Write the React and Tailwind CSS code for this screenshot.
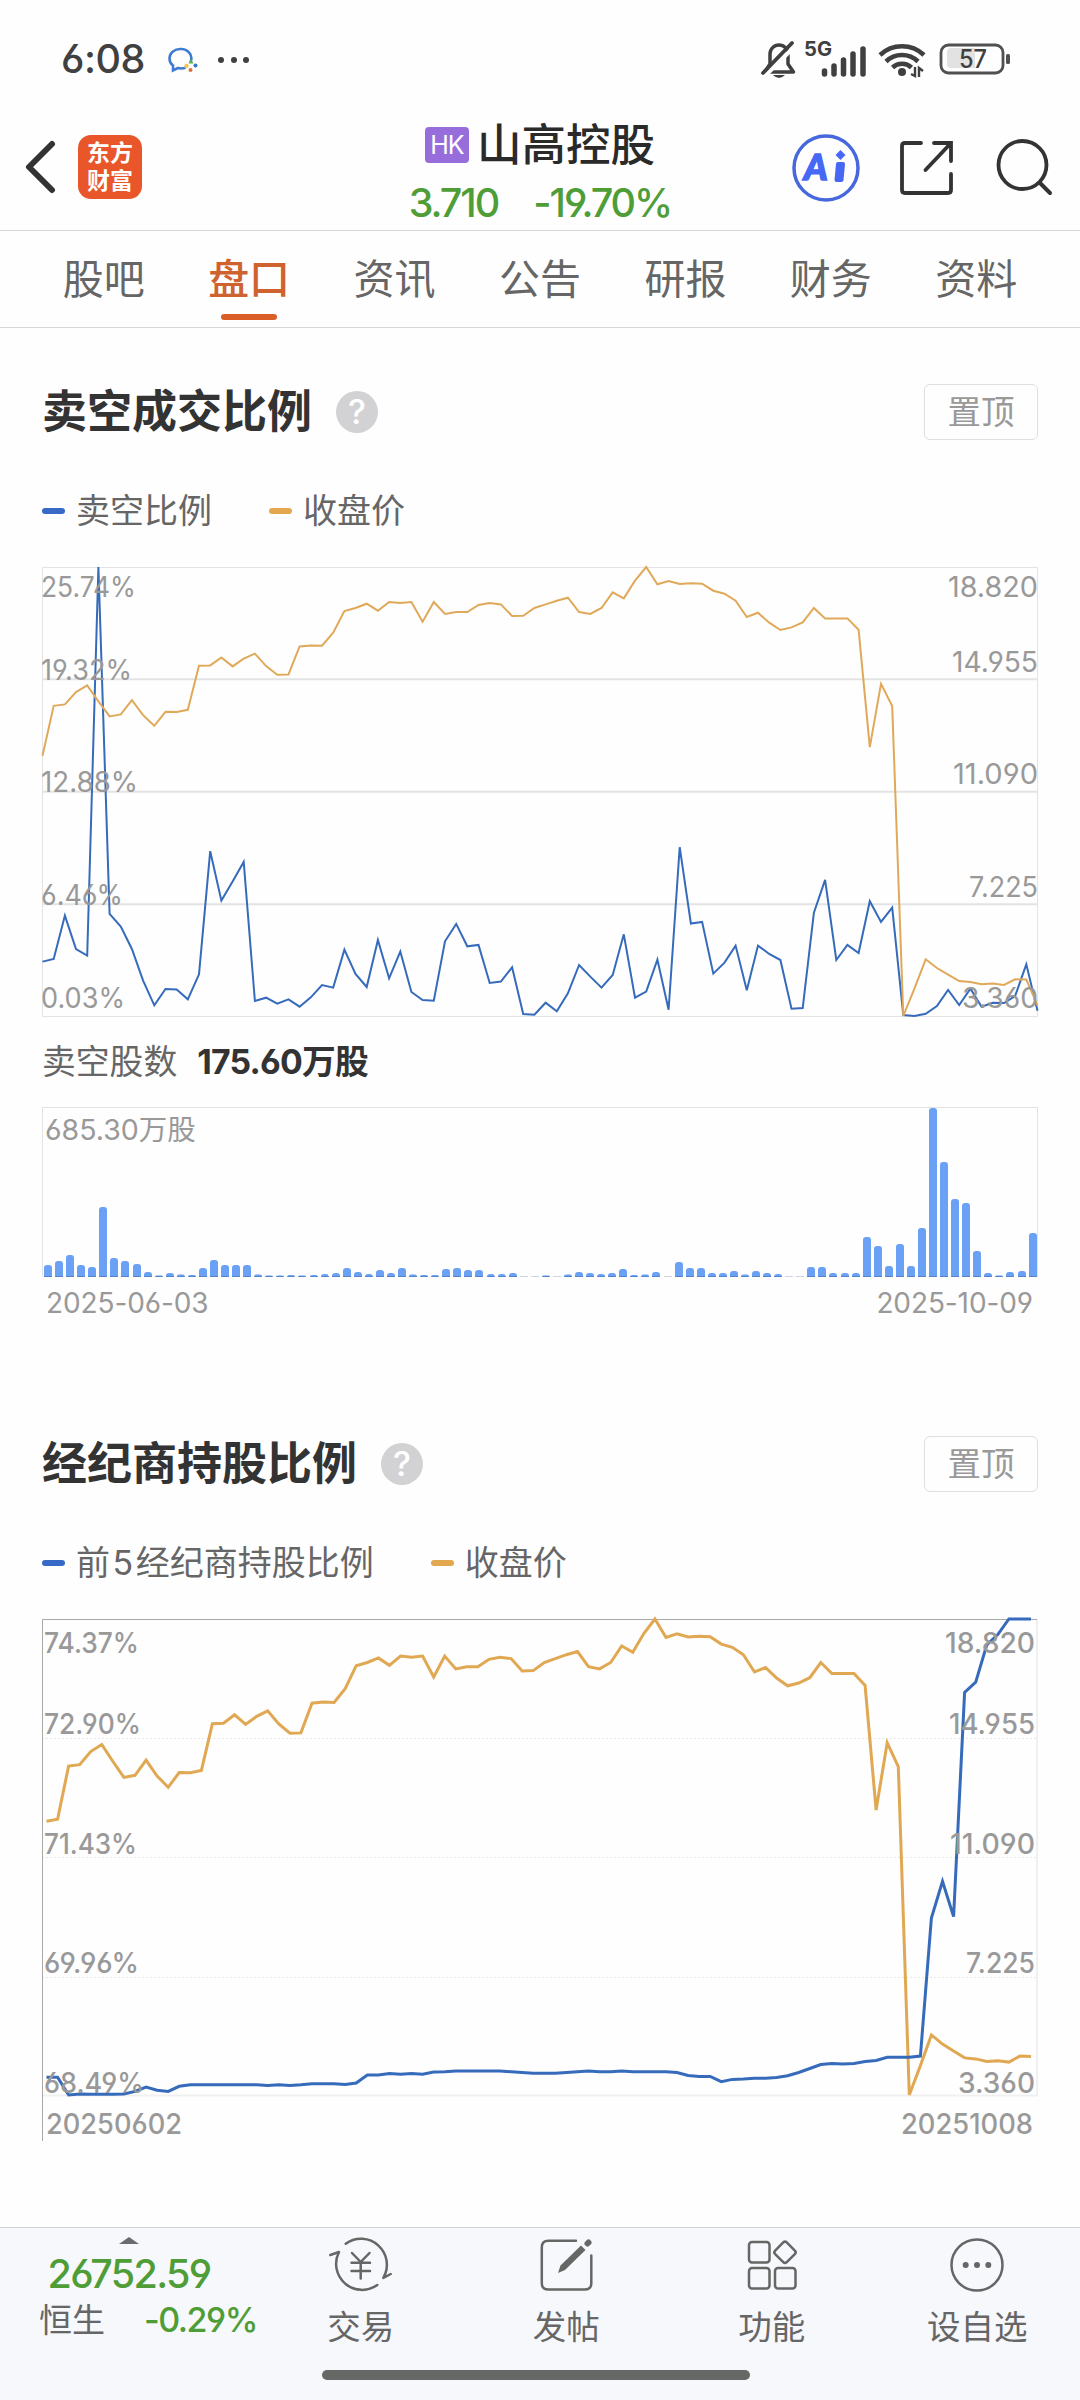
import React from 'react';

const prices = [
  618, 468, 464, 427, 407, 455, 500, 494, 451, 496, 528, 486, 487, 480, 348, 347, 323, 350, 327, 312,
  349, 375, 374, 290, 287, 288, 249, 184, 175, 162, 183, 157, 160, 157, 216, 157, 193, 187, 187, 166,
  160, 164, 199, 198, 175, 164, 153, 144, 187, 193, 175, 128, 146, 93, 52, 104, 94, 103, 101, 102,
  123, 132, 153, 202, 189, 219, 241, 233, 218, 175, 206, 206, 206, 240, 592, 402, 469, 1398, 1315, 1228,
  1254, 1274, 1293, 1296, 1303, 1301, 1305, 1288, 1289, 1366,
];

const shortRatio = [
  1235, 1227, 1097, 1197, 1217, 52, 1092, 1130, 1197, 1292, 1366, 1317, 1319, 1348, 1273, 904, 1052, 995, 936, 1353,
  1343, 1361, 1348, 1370, 1342, 1305, 1313, 1199, 1272, 1311, 1170, 1285, 1205, 1326, 1350, 1352, 1174, 1122, 1189, 1185,
  1299, 1295, 1252, 1392, 1394, 1358, 1384, 1330, 1245, 1280, 1313, 1275, 1153, 1343, 1325, 1229, 1379, 892, 1121, 1116,
  1271, 1238, 1187, 1321, 1187, 1212, 1230, 1376, 1374, 1088, 990, 1230, 1185, 1209, 1054, 1116, 1073, 1395, 1398, 1391,
  1368, 1320, 1365, 1316, 1370, 1358, 1359, 1338, 1243, 1382,
];

const brokerRatio = [
  1342, 1342, 1391, 1388, 1389, 1389, 1389, 1388, 1381, 1369, 1378, 1381, 1367, 1363, 1363, 1363, 1363, 1363, 1363, 1363,
  1365, 1363, 1365, 1363, 1360, 1360, 1360, 1362, 1358, 1336, 1336, 1332, 1334, 1332, 1334, 1328, 1327, 1325, 1325, 1325,
  1325, 1325, 1327, 1329, 1331, 1331, 1331, 1329, 1327, 1325, 1327, 1327, 1325, 1327, 1327, 1327, 1327, 1329, 1337, 1340,
  1340, 1354, 1348, 1347, 1345, 1345, 1343, 1338, 1329, 1318, 1307, 1304, 1306, 1304, 1299, 1296, 1287, 1287, 1287, 1284,
  904, 803, 900, 283, 255, 152, 124, 81, 81, 81,
];

// bar heights in px, chart is 169px tall
const volumes = [
  12, 16, 22, 11.7, 10, 69.7, 18.7, 16, 13, 5, 1.7, 4, 2.7, 2, 9, 17.3, 12.3, 12.3, 12.3, 2.7,
  1.7, 1.7, 2, 1.7, 2, 3.3, 3.7, 9, 4.7, 3, 7.3, 4, 8.7, 2.7, 2, 2, 7.7, 8.7, 7, 7,
  3.3, 3, 4.3, 0.7, 0.7, 1.7, 0.7, 2.7, 5, 4, 3, 4.3, 8, 2, 2.7, 5, 0.7, 15, 9, 9,
  3.7, 4.3, 6.3, 2.7, 6, 4, 3.3, 0.7, 0.7, 10.3, 10, 3.7, 4.3, 4.3, 40, 31.3, 10.7, 33.3, 10.7, 49.3,
  168.7, 115, 78, 74, 26, 4, 1.7, 5, 6, 43.7,
];

const tabs = ['股吧', '盘口', '资讯', '公告', '研报', '财务', '资料'];

// values grow downwards, the smallest one touches the top of the plot
const toPoints = (values, left, width, height) => {
  const min = Math.min(...values);
  const max = Math.max(...values);
  return values
    .map((v, i) => {
      const x = left + (i * width) / (values.length - 1);
      const y = ((v - min) / (max - min)) * height;
      return `${x.toFixed(1)},${y.toFixed(1)}`;
    })
    .join(' ');
};

const Label = ({ x, y, width, children }) => (
  <text x={x} y={y} textLength={width} lengthAdjust="spacingAndGlyphs">{children}</text>
);

const StatusBar = () => (
  <div className="h-[120px] flex items-center justify-between pl-[61px] pr-[69px] text-[#404040]">
    <div className="flex items-center">
      <span className="w-[84px] text-[39.500px] leading-none font-medium tracking-[-0.5px]">6:08</span>
      <svg className="w-9 h-9 ml-5" viewBox="0 0 36 36" fill="none">
        <path d="M25.5 20.5c2.5-6-1-13-9-13.5C9.500 6.500 4.500 11 4.500 16.500c0 3 1.500 5.500 3.500 7v5l5-2.500c3 .8 5 .6 7.500-.3" stroke="#3d7cd0" strokeWidth="2.6" />
        <path d="M26 17l2.500 4.500h-5z" fill="#5bb04c" />
        <circle cx="30.500" cy="23.500" r="2" fill="#3478c8" />
        <circle cx="25.500" cy="28" r="2" fill="#d8713a" />
        <circle cx="21.500" cy="24" r="2.200" fill="#f2c64b" />
      </svg>
      <div className="flex gap-[6.500px] ml-[17px]">
        <i className="w-1.5 h-1.5 rounded-full bg-[#404040]" />
        <i className="w-1.5 h-1.5 rounded-full bg-[#404040]" />
        <i className="w-1.5 h-1.5 rounded-full bg-[#404040]" />
      </div>
    </div>
    <svg className="w-[250px] h-12 overflow-visible" viewBox="761 36 250 48" fill="none">
      {/* muted bell */}
      <path d="M767 72h26.500l-5.500-8V54a9 9 0 0 0-18 0v10l-5 8" stroke="#404040" strokeWidth="3.500" strokeLinejoin="round" />
      <path d="M766 75 796 45" stroke="#fefefe" strokeWidth="4" />
      <path d="M763 73 792 43" stroke="#404040" strokeWidth="3.800" strokeLinecap="round" />
      <path d="M773 75h12q-6 6-12 0z" fill="#404040" />
      <text x="804" y="56" fontSize="20" fontWeight="700" fill="#404040" textLength="28" lengthAdjust="spacingAndGlyphs">5G</text>
      <path d="M824.500 74v-3M834 74v-8M843.500 74v-14M853 74v-20M863 74V49" stroke="#404040" strokeWidth="5.500" strokeLinecap="round" />
      {/* wifi */}
      <path d="M880 55a32 32 0 0 1 44 0M886 61.500a23 23 0 0 1 32 0M892.500 67.500a14 14 0 0 1 19 0" stroke="#404040" strokeWidth="4.600" />
      <circle cx="902" cy="72" r="4" fill="#404040" />
      <path d="M911 74l4 2v-9M919 77v-9l4 3" stroke="#404040" strokeWidth="2.400" />
      {/* battery */}
      <rect x="941" y="45" width="62" height="28" rx="7.500" stroke="#505050" strokeWidth="2.800" />
      <path d="M951 48h24v20h-24q-4 0-4-4V52q0-4 4-4z" fill="#e2e2e2" />
      <rect x="1006" y="54" width="4" height="10" rx="1.500" fill="#505050" />
      <text x="959" y="68" fontSize="25" fontWeight="500" fill="#404040" textLength="28" lengthAdjust="spacingAndGlyphs">57</text>
    </svg>
  </div>
);

const Header = () => (
  <div className="relative h-[111px] flex items-center justify-between pl-6 pr-[27px] border-b border-[#d6d6d6] pb-4">
    <div className="flex items-center gap-[22px]">
      <svg className="w-8 h-14" viewBox="0 0 32 56" fill="none">
        <path d="M28 5 5 28 28 51" stroke="#333" strokeWidth="6" strokeLinecap="round" strokeLinejoin="round" />
      </svg>
      <div className="w-16 h-16 rounded-[13px] bg-[#e9562a] flex flex-col items-center justify-center text-white text-[23px] leading-[28px] font-bold">
        <span>东方</span>
        <span>财富</span>
      </div>
    </div>
    <div className="absolute inset-x-0 top-px flex flex-col items-center">
      <div className="flex items-center gap-2 h-12">
        <span className="w-11 h-9 rounded bg-[#976ddc] text-white text-[25px] leading-9 text-center tracking-[-1px]">HK</span>
        <span className="text-[44.500px] leading-[48px] text-[#2a2a2a] font-medium">山高控股</span>
      </div>
      <div className="flex gap-[35px] mt-[9px] text-[39.500px] leading-[50px] font-medium text-[#4f9d37]">
        <span className="tracking-[-2px]">3.710</span>
        <span className="tracking-[-2px]">-19.70%</span>
      </div>
    </div>
    <svg className="w-[262px] h-[70px]" viewBox="791 131 262 70" fill="none" strokeLinecap="round">
      <circle cx="826" cy="167" r="32" stroke="#4767dd" strokeWidth="3.500" />
      <text x="804" y="179" fontSize="36" fontWeight="900" fontStyle="italic" fill="#4767f5" stroke="#4767f5" strokeWidth="1.500" fontFamily="Lato">A</text>
      <path d="M838 163h5l-1.500 16h-5z" fill="#4767f5" stroke="#4767f5" strokeWidth="4" strokeLinejoin="round" />
      <path d="m840.500 149 5 5-5 5-5-5z" fill="#4767f5" />
      <path d="M921 142h-16q-3 0-3 3v44q0 3 3 3h43q3 0 3-3v-16M934 142h17v18M951 142 925.500 169" stroke="#333" strokeWidth="3.800" />
      <circle cx="1022.500" cy="164" r="24" stroke="#333" strokeWidth="3.800" />
      <path d="M1040 182 1050 192" stroke="#333" strokeWidth="4" />
    </svg>
  </div>
);

const SectionTitle = ({ title }) => (
  <div className="flex items-center justify-between h-14">
    <div className="flex items-center">
      <h2 className="text-[45px] leading-[56px] font-bold text-[#333]">{title}</h2>
      <span className="ml-6 w-[42px] h-[42px] rounded-full bg-[#d2d2d4] text-white text-[34px] leading-[42px] font-medium text-center">?</span>
    </div>
    <button className="w-[114px] h-14 pt-0.5 rounded-md border border-[#dfdfdf] text-[33.500px] leading-none text-[#999]">置顶</button>
  </div>
);

const Legend = ({ items }) => (
  <div className="flex items-center gap-[57px] h-10 text-[34px] leading-10 text-[#666]">
    {items.map((label, i) => (
      <div key={i} className="flex items-center gap-[11px]">
        <span className={i === 0 ? 'w-[23px] h-1.5 rounded-sm bg-[#366ac6]' : 'w-[23px] h-1.5 rounded-sm bg-[#e3a750]'} />
        <span>{label}</span>
      </div>
    ))}
  </div>
);

const ShortRatioChart = () => (
  <svg className="block w-[1000px] h-[454px] -ml-0.5 overflow-visible" viewBox="-2 -2 1000 454" fill="none">
    <path d="M0.500 0.500H995.500V449.500H0.500Z" stroke="#e3e3e3" strokeWidth="1" />
    <path d="M0 112.300H995.500M0 224.700H995.500M0 337.300H995.500" stroke="#e3e3e3" strokeWidth="2" />
    <polyline points={toPoints(shortRatio, 0.5, 995, 449)} stroke="#366bbb" strokeWidth="2" />
    <polyline points={toPoints(prices, 0.5, 995, 449)} stroke="#e0a95a" strokeWidth="2" />
    <g fill="#999" fontSize="28">
      <Label x="-1" y="29.500" width="95">25.74%</Label>
      <Label x="-1" y="112.500" width="91">19.32%</Label>
      <Label x="-1" y="224.500" width="97">12.88%</Label>
      <Label x="-1" y="337.500" width="82">6.46%</Label>
      <Label x="-1" y="440.500" width="84">0.03%</Label>
      <Label x="906" y="29.500" width="90">18.820</Label>
      <Label x="910" y="104.500" width="86">14.955</Label>
      <Label x="911" y="216.500" width="85">11.090</Label>
      <Label x="927" y="329.500" width="69">7.225</Label>
      <Label x="920" y="440.500" width="76">3.360</Label>
    </g>
  </svg>
);

const VolumeChart = () => (
  <div className="relative w-[996px] h-[170px] flex items-end justify-between pl-px border border-b-0 border-[#e3e3e3]">
    <span className="absolute left-0.5 top-1 text-[28.500px] leading-9 text-[#999]">685.30万股</span>
    {volumes.map((h, i) => (
      <i
        key={i}
        className={h < 1 ? 'w-2 bg-[#cfd6e2]' : 'w-2 rounded-t-[3px] bg-[#6aa1f4] border-b border-[#5585cf]'}
        style={{ height: h }}
      />
    ))}
  </div>
);

const BrokerChart = () => (
  <svg className="block w-[1000px] h-[526px] -ml-0.5 overflow-visible" viewBox="-2 -2 1000 526" fill="none">
    <path d="M0 119.500H995M0 238.500H995M0 358.500H995" stroke="#e8e8e8" strokeWidth="1" strokeDasharray="2 2" />
    <path d="M0 476.500H995V0" stroke="#f0f0f0" strokeWidth="2" />
    <path d="M0.500 522V0.500H995" stroke="#a8a8a8" strokeWidth="1" />
    <polyline points={toPoints([624, ...prices.slice(0, 89)], 4.5, 984.5, 476)} stroke="#e0a852" strokeWidth="3" />
    <polyline points={toPoints(brokerRatio, 4.5, 984.5, 476)} stroke="#366bbb" strokeWidth="3" />
    <g fill="#999" fontSize="28" fontWeight="500">
      <Label x="2" y="34" width="95">74.37%</Label>
      <Label x="2" y="115" width="97">72.90%</Label>
      <Label x="2" y="235" width="93">71.43%</Label>
      <Label x="2" y="354" width="95">69.96%</Label>
      <Label x="2" y="474" width="100">68.49%</Label>
      <Label x="903" y="34" width="90">18.820</Label>
      <Label x="907" y="115" width="86">14.955</Label>
      <Label x="908" y="235" width="85">11.090</Label>
      <Label x="924" y="354" width="69">7.225</Label>
      <Label x="916" y="474" width="77">3.360</Label>
      <Label x="4" y="514.500" width="136">20250602</Label>
      <Label x="859" y="514.500" width="132">20251008</Label>
    </g>
  </svg>
);

const TradeIcon = () => (
  <svg className="w-[64px] h-14" viewBox="0 0 64 56" fill="none" stroke="#666" strokeWidth="2.500" strokeLinecap="round" strokeLinejoin="round">
    <path d="M16.700 6.700A26 26 0 0 1 54.300 41L61.700 37" />
    <path d="M48.300 48A26 26 0 0 1 10 15L1.300 18" />
    <path d="M23 16l8.700 9L40.500 16M31.700 25v16.500M22.500 25.700h18.500M22.500 34h18.500" />
  </svg>
);

const PostIcon = () => (
  <svg className="w-14 h-14" viewBox="0 0 56 56" fill="none" stroke="#666" strokeWidth="2.500" strokeLinecap="round">
    <path d="M38 3.700H10.300q-6.500 0-6.500 6.500v36q0 6.300 6.500 6.300h36.500q6.500 0 6.500-6.300V18.500" />
    <path d="M20 36l2.500-7.500L43 8.500l4.500 4.500L27 33z" fill="#666" stroke="none" />
    <path d="M49.500 6.500l1-1" strokeWidth="6" />
  </svg>
);

const GridIcon = () => (
  <svg className="w-14 h-14" viewBox="0 0 56 56" fill="none" stroke="#666" strokeWidth="2.500">
    <rect x="5" y="5" width="20.500" height="20.500" rx="3" />
    <rect x="5" y="31" width="20.500" height="20.500" rx="3" />
    <rect x="31" y="31" width="20.500" height="20.500" rx="3" />
    <rect x="32.800" y="7.100" width="16.400" height="16.400" rx="2.500" transform="rotate(45 41 15.300)" />
  </svg>
);

const MoreIcon = () => (
  <svg className="w-14 h-14" viewBox="0 0 56 56" fill="none">
    <circle cx="28" cy="28" r="25.500" stroke="#666" strokeWidth="2.500" />
    <circle cx="16.700" cy="28" r="3" fill="#666" />
    <circle cx="28" cy="28" r="3" fill="#666" />
    <circle cx="39.300" cy="28" r="3" fill="#666" />
  </svg>
);

const actions = [
  { label: '交易', icon: <TradeIcon /> },
  { label: '发帖', icon: <PostIcon /> },
  { label: '功能', icon: <GridIcon /> },
  { label: '设自选', icon: <MoreIcon /> },
];

const BottomBar = () => (
  <div className="h-[173px] bg-[#f6f8fb] border-t border-[#cfd3d7]">
    <div className="flex h-[142px]">
      <div className="w-[258px] flex flex-col items-center">
        <svg className="w-5 h-[7px] mt-[9px]" viewBox="0 0 20 7">
          <path d="M10 0 20 7H0z" fill="#6b6b70" />
        </svg>
        <div className="mt-2 text-[39.500px] leading-[44px] tracking-[-1.700px] font-medium text-[#4f9d37]">26752.59</div>
        <div className="w-[218px] ml-[38px] mt-px flex items-center justify-between text-[33px] leading-[46px] text-[#666]">
          <span>恒生</span>
          <span className="text-[34px] tracking-[-1.500px] font-medium text-[#4f9d37]">-0.29%</span>
        </div>
      </div>
      <div className="w-[822px] grid grid-cols-4">
        {actions.map(({ label, icon }) => (
          <div key={label} className="flex flex-col items-center pt-[9px]">
            {icon}
            <span className="mt-[14px] text-[33.500px] leading-[40px] text-[#666]">{label}</span>
          </div>
        ))}
      </div>
    </div>
    <div className="w-[428px] h-[10px] ml-[322px] rounded-full bg-[#666866]" />
  </div>
);

const App = () => {
  const active = '盘口';

  return (
    <div className="w-[1080px] h-[2400px] flex flex-col overflow-hidden bg-[#fefefe] font-[Inter,'Noto_Sans_CJK_SC',sans-serif] [font-feature-settings:'cv03','cv04']">
      <StatusBar />
      <Header />
      <nav className="h-[97px] flex px-[31px] border-b border-[#d6d6d6]">
        {tabs.map((tab) => (
          <div
            key={tab}
            className={
              tab === active
                ? 'flex-1 flex flex-col items-center text-[41px] leading-[60px] pt-[18px] font-medium text-[#cf632f]'
                : 'flex-1 flex flex-col items-center text-[41px] leading-[60px] pt-[18px] text-[#666]'
            }
          >
            {tab}
            {tab === active && <span className="w-14 h-1.5 mt-[5px] rounded-full bg-[#d95e28]" />}
          </div>
        ))}
      </nav>

      <main className="flex-1 px-[42px]">
        <section className="h-[1052px] pt-[56px]">
          <SectionTitle title="卖空成交比例" />
          <div className="mt-[51px]">
            <Legend items={['卖空比例', '收盘价']} />
          </div>
          <div className="mt-[34px]">
            <ShortRatioChart />
          </div>
          <div className="flex items-center gap-[20px] h-10 mt-[23px] text-[33.800px] text-[#666]">
            <span>卖空股数</span>
            <span className="font-bold text-[#333] tracking-[-0.800px]">175.60万股</span>
          </div>
          <div className="mt-[25px]">
            <VolumeChart />
          </div>
          <div className="flex justify-between pl-1 pr-[5px] mt-2 text-[28px] leading-9 tracking-[-0.100px] text-[#999]">
            <span>2025-06-03</span>
            <span>2025-10-09</span>
          </div>
        </section>

        <section className="pt-[56px]">
          <SectionTitle title="经纪商持股比例" />
          <div className="mt-[51px]">
            <Legend items={[<>前<span className="mx-[2.500px]">5</span>经纪商持股比例</>, '收盘价']} />
          </div>
          <div className="mt-[34px]">
            <BrokerChart />
          </div>
        </section>
      </main>

      <BottomBar />
    </div>
  );
};

export default App;
